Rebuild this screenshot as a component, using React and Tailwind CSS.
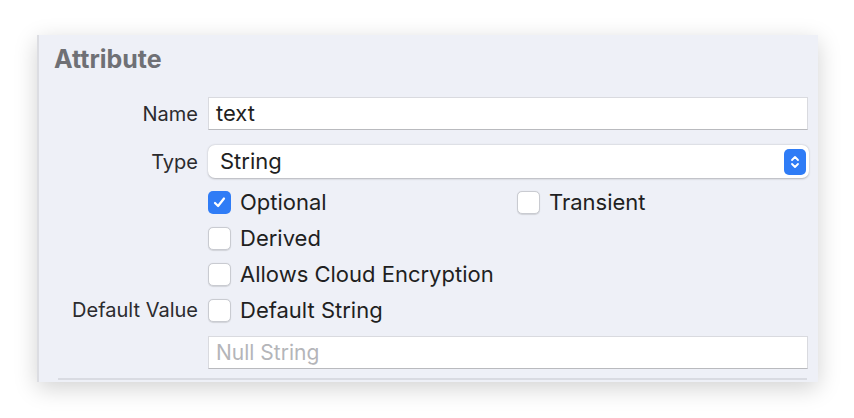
import React from "react";

function Checkbox({ checked }) {
  if (checked) {
    return (
      <div className="w-[23px] h-[23px] rounded-[5px] bg-[#2f7cf6] flex items-center justify-center shrink-0">
        <svg width="15" height="15" viewBox="0 0 16 16" fill="none">
          <path d="M3.2 8.6 L6.5 11.8 L12.8 3.8" stroke="white" strokeWidth="2.4" strokeLinecap="round" strokeLinejoin="round" />
        </svg>
      </div>
    );
  }
  return (
    <div className="w-[23px] h-[23px] rounded-[5px] bg-white border border-[#c9cbd1] shadow-[0_0.5px_1px_rgba(0,0,0,0.12)] shrink-0" />
  );
}

function Row({ label, children, className = "" }) {
  return (
    <div className={"flex items-center " + className}>
      <div className="w-[169px] pr-[10px] text-right text-[20px] text-[#2b2b2e] shrink-0 whitespace-nowrap">{label}</div>
      <div className="flex-1 flex items-center">{children}</div>
    </div>
  );
}

function Check({ label, checked }) {
  return (
    <div className="flex items-center gap-[9px]">
      <Checkbox checked={checked} />
      <span className="text-[22px] text-[#1f1f22] whitespace-nowrap">{label}</span>
    </div>
  );
}

export default function App() {
  return (
    <div className="w-[854px] h-[418px] bg-white overflow-hidden" style={{ fontFamily: "Inter, 'Open Sans', sans-serif" }}>
      <div className="ml-[37px] mt-[35px] w-[781px] h-[347px] bg-[#eef0f7] border-l-[2px] border-[#dcdde2] shadow-[0_6px_22px_rgba(0,0,0,0.18)] flex flex-col">
        <div className="pl-[15px] pt-[9px] text-[25px] font-bold text-[#6f7075] leading-[30px]">Attribute</div>

        <Row label="Name" className="mt-[23px] h-[33px] pr-[10px]">
          <div className="flex-1 h-[33px] bg-white border border-[#d9dadf] border-b-[#b9babe] flex items-center pl-[7px] text-[22px] text-[#1f1f22]">text</div>
        </Row>

        <Row label="Type" className="mt-[15px] h-[33px] pr-[9px]">
          <div className="flex-1 h-[33px] bg-white rounded-[7px] shadow-[0_0.5px_2px_rgba(0,0,0,0.25)] flex items-center pl-[12px] pr-[3px] text-[22px] text-[#1f1f22]">
            <span className="flex-1">String</span>
            <div className="w-[22px] h-[26px] rounded-[5px] bg-[#2f7cf6] flex items-center justify-center">
              <svg width="12" height="18" viewBox="0 0 12 18" fill="none">
                <path d="M3 7 L6 4 L9 7" stroke="white" strokeWidth="1.8" strokeLinecap="round" strokeLinejoin="round" />
                <path d="M3 11 L6 14 L9 11" stroke="white" strokeWidth="1.8" strokeLinecap="round" strokeLinejoin="round" />
              </svg>
            </div>
          </div>
        </Row>

        <Row label="" className="mt-[12px] h-[24px]">
          <div className="w-[309px]"><Check label="Optional" checked /></div>
          <Check label="Transient" />
        </Row>
        <Row label="" className="mt-[12px] h-[24px]">
          <Check label="Derived" />
        </Row>
        <Row label="" className="mt-[12px] h-[24px]">
          <Check label="Allows Cloud Encryption" />
        </Row>
        <Row label="Default Value" className="mt-[12px] h-[24px]">
          <Check label="Default String" />
        </Row>

        <Row label="" className="mt-[14px] h-[33px] pr-[10px]">
          <div className="flex-1 h-[33px] bg-white border border-[#d9dadf] border-b-[#b9babe] flex items-center pl-[7px] text-[21px] text-[#b4b5b9]">Null String</div>
        </Row>

        <div className="mt-[9px] ml-[19px] mr-[11px] h-[2px] bg-[#d9dbe2]" />
      </div>
    </div>
  );
}
